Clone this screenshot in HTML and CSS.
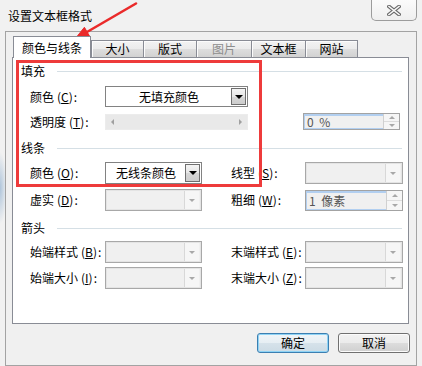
FILE: index.html
```html
<!DOCTYPE html>
<html lang="zh-CN">
<head>
<meta charset="utf-8">
<title>设置文本框格式</title>
<link rel="stylesheet" href="styles.css">
</head>
<body>
<div class="window">
  <div class="titlebar">
    <span class="title">设置文本框格式</span>
    <div class="close">
      <svg width="14" height="11" viewBox="0 0 14 11"><path d="M2 1.5 L12 9.5 M12 1.5 L2 9.5" stroke="#6a6a6a" stroke-width="3.6" stroke-linecap="square"/><path d="M2 1.5 L12 9.5 M12 1.5 L2 9.5" stroke="#fbfbfb" stroke-width="1.6" stroke-linecap="square"/></svg>
    </div>
  </div>
  <div class="client">
    <div class="tabs">
      <div class="tab active">颜色与线条</div>
      <div class="tab">大小</div>
      <div class="tab">版式</div>
      <div class="tab disabled">图片</div>
      <div class="tab">文本框</div>
      <div class="tab">网站</div>
    </div>
    <div class="panel">
      <div class="section s1"><span>填充</span><i class="rule"></i></div>
      <div class="row r1">
        <span class="lbl">颜色<span class="mn">(<u>C</u>)</span>:</span>
        <div class="combo wide"><span class="val">无填充颜色</span><span class="cbtn"><i class="tri"></i></span></div>
      </div>
      <div class="row r2">
        <span class="lbl">透明度<span class="mn">(<u>T</u>)</span>:</span>
        <div class="slider"><i class="sl-left"></i><i class="sl-right"></i></div>
        <div class="spin pct"><span class="sv">0&nbsp;%</span><span class="sb"><i class="up"></i><i class="dn"></i></span></div>
      </div>
      <div class="section s2"><span>线条</span><i class="rule"></i></div>
      <div class="row r3">
        <span class="lbl">颜色<span class="mn">(<u>O</u>)</span>:</span>
        <div class="combo"><span class="val">无线条颜色</span><span class="cbtn"><i class="tri"></i></span></div>
        <span class="lbl rl">线型<span class="mn">(<u>S</u>)</span>:</span>
        <div class="combo dis"><span class="val"></span><span class="cbtn"><i class="tri"></i></span></div>
      </div>
      <div class="row r4">
        <span class="lbl">虚实<span class="mn">(<u>D</u>)</span>:</span>
        <div class="combo dis"><span class="val"></span><span class="cbtn"><i class="tri"></i></span></div>
        <span class="lbl rl">粗细<span class="mn">(<u>W</u>)</span>:</span>
        <div class="spin wt"><span class="sv">1&nbsp;像素</span><span class="sb"><i class="up"></i><i class="dn"></i></span></div>
      </div>
      <div class="section s3"><span>箭头</span><i class="rule"></i></div>
      <div class="row r5">
        <span class="lbl">始端样式<span class="mn">(<u>B</u>)</span>:</span>
        <div class="combo dis"><span class="val"></span><span class="cbtn"><i class="tri"></i></span></div>
        <span class="lbl rl">末端样式<span class="mn">(<u>E</u>)</span>:</span>
        <div class="combo dis"><span class="val"></span><span class="cbtn"><i class="tri"></i></span></div>
      </div>
      <div class="row r6">
        <span class="lbl">始端大小<span class="mn">(<u>I</u>)</span>:</span>
        <div class="combo dis"><span class="val"></span><span class="cbtn"><i class="tri"></i></span></div>
        <span class="lbl rl">末端大小<span class="mn">(<u>Z</u>)</span>:</span>
        <div class="combo dis"><span class="val"></span><span class="cbtn"><i class="tri"></i></span></div>
      </div>
    </div>
    <div class="buttons">
      <button class="btn default">确定</button>
      <button class="btn">取消</button>
    </div>
  </div>
  <div class="annot-box"></div>
  <svg class="annot-arrow" width="70" height="45" viewBox="0 0 70 45">
    <path d="M66 3.5 L17 32" stroke="#ea2a2a" stroke-width="2.6" stroke-linecap="round"/>
    <path d="M5 39 L19.8 36.6 L14.4 27.3 Z" fill="#ea2a2a" stroke="#ea2a2a" stroke-width="1" stroke-linejoin="round"/>
  </svg>
</div>
</body>
</html>
```
FILE: styles.css
```css
* { box-sizing: border-box; margin: 0; padding: 0; }
html, body { width: 422px; height: 366px; overflow: hidden; }
body {
  font: 12px/1 "Noto Sans CJK SC", "DejaVu Sans", sans-serif;
  color: #000;
  background: #f0f0f0;
}
u { text-decoration: underline; }

.window {
  position: relative;
  width: 422px;
  height: 366px;
  display: flex;
  flex-direction: column;
  background:
    radial-gradient(7px 36px at 0 188px, rgba(120,160,200,.55), rgba(120,160,200,0)),
    #f1f1f1;
}

.titlebar {
  height: 31px;
  flex: none;
  display: flex;
  justify-content: space-between;
  align-items: flex-start;
}
.title { margin: 9px 0 0 8px; line-height: 13px; }
.close {
  width: 46px;
  height: 21px;
  margin-right: 5px;
  border: 1px solid #9c9c9c;
  border-top: none;
  border-radius: 0 0 5px 5px;
  background: linear-gradient(#fbfbfb, #efefef);
  display: flex;
  align-items: center;
  justify-content: center;
}

.client {
  margin-left: 5px;
  width: 412px;
  flex: 1;
  border: 1px solid #a3a3a3;
  background: #f0f0f0;
  display: flex;
  flex-direction: column;
}

.tabs {
  display: flex;
  align-items: flex-end;
  height: 21px;
  margin: 4px 0 0 7px;
}
.tab {
  height: 17px;
  border: 1px solid #898c95;
  border-bottom: none;
  background: linear-gradient(#f3f3f3, #ebebeb 50%, #dedede 50%, #d2d2d2);
  box-shadow: inset 1px 1px 0 #fcfcfc;
  display: flex;
  align-items: center;
  justify-content: center;
  margin-left: -1px;
  line-height: 14px;
}
.tab.active {
  height: 22px;
  margin-bottom: -1px;
  margin-left: 0;
  background: #fff;
  box-shadow: none;
  position: relative;
  z-index: 1;
  padding-top: 1px;
}
.tab:nth-child(1) { width: 78px; }
.tab:nth-child(2) { width: 53px; margin-left: 0; }
.tab:nth-child(3) { width: 54px; }
.tab:nth-child(4) { width: 56px; }
.tab:nth-child(5) { width: 55px; }
.tab:nth-child(6) { width: 53px; }
.tab.disabled { color: #8d8d8d; }

.panel {
  margin-left: 6px;
  width: 397px;
  height: 267px;
  flex: none;
  background: #fff;
  border: 1px solid #898c95;
  display: flex;
  flex-direction: column;
}

.section {
  height: 14px;
  display: flex;
  align-items: center;
  padding-left: 8px;
  line-height: 14px;
}
.section .rule {
  flex: 1;
  height: 1px;
  background: #d5dfe5;
  margin: 0 6px 0 12px;
}
.s1 { margin-top: 6px; }
.s2 { margin-top: 11px; }
.s3 { margin-top: 10px; }

.row {
  display: grid;
  grid-template-columns: 75px 97px 29px 74px 98px;
  align-items: center;
  padding-left: 17px;
}
.lbl { line-height: 14px; white-space: nowrap; }
.mn { margin: 0 1px 0 3px; }
.rl { grid-column: 4; }
.r1 { margin-top: 8px; height: 21px; }
.r2 { margin-top: 6px; height: 17px; }
.r3 { margin-top: 7px; height: 22px; }
.r4 { margin-top: 5px; height: 22px; }
.r5 { margin-top: 6px; height: 22px; }
.r6 { margin-top: 4px; height: 22px; }

.combo {
  height: 100%;
  border: 1px solid #828282;
  background: #fff;
  display: flex;
  align-items: stretch;
  padding: 1px;
}
.combo.wide { grid-column: 2 / span 3; width: 143px; }
.combo .val {
  flex: 1;
  display: flex;
  align-items: center;
  justify-content: center;
  line-height: 14px;
}
.cbtn {
  width: 15px;
  border: 1px solid #6f6f6f;
  background: linear-gradient(#f4f4f4, #e6e6e6 50%, #d6d6d6 50%, #cdcdcd);
  display: flex;
  align-items: center;
  justify-content: center;
}
.tri {
  width: 0;
  height: 0;
  border-left: 4px solid transparent;
  border-right: 4px solid transparent;
  border-top: 4px solid #000;
}
.combo.dis {
  border-color: #a8a8a8;
  background: #f0f0f0;
  box-shadow: inset 0 0 0 1px #e4e4e4;
}
.combo.dis .cbtn {
  border: none;
  border-left: 1px solid #d8d8d8;
  background: #f6f6f6;
  margin-right: 1px;
}
.combo.dis .tri {
  border-left-width: 3px;
  border-right-width: 3px;
  border-top: 3px solid #a8a8a8;
}

.slider {
  grid-column: 2 / span 3;
  width: 143px;
  height: 16px;
  background: #e9e9e9;
  border: 1px solid #ececec;
  display: flex;
  align-items: center;
  justify-content: space-between;
  padding: 0 5px;
}
.sl-left, .sl-right {
  width: 0;
  height: 0;
  border-top: 3px solid transparent;
  border-bottom: 3px solid transparent;
}
.sl-left { border-right: 3px solid #a0a0a0; }
.sl-right { border-left: 3px solid #a0a0a0; }

.spin {
  height: 100%;
  border: 1px solid #a3a3a3;
  background: #f0f0f0;
  display: flex;
}
.spin.pct { grid-column: 5; width: 97px; margin-left: -2px; height: 17px; }
.spin.wt { height: 21px; }
.spin .sv {
  flex: 1;
  border-top: 2px solid #b2cff0;
  border-left: 1px solid #b2cff0;
  border-bottom: 1px solid #b2cff0;
  color: #555;
  display: flex;
  align-items: center;
  padding-left: 2px;
  line-height: 12px;
  white-space: nowrap;
  word-spacing: 3px;
}
.spin .sb {
  width: 16px;
  border-left: 1px solid #d0d0d0;
  background: #f6f6f6;
  display: flex;
  flex-direction: column;
}
.sb .up, .sb .dn {
  flex: 1;
  display: flex;
  align-items: center;
  justify-content: center;
}
.sb .up { border-bottom: 1px solid #dcdcdc; }
.sb .up::after, .sb .dn::after {
  content: "";
  width: 0;
  height: 0;
  border-left: 3px solid transparent;
  border-right: 3px solid transparent;
}
.sb .up::after { border-bottom: 3px solid #a8a8a8; }
.sb .dn::after { border-top: 3px solid #a8a8a8; }

.buttons {
  display: flex;
  justify-content: flex-end;
  gap: 9px;
  margin: 9px 6px 0 0;
}
.btn {
  width: 72px;
  height: 20px;
  border: 1px solid #707070;
  border-radius: 3px;
  background: linear-gradient(#f2f2f2, #ebebeb 50%, #dddddd 50%, #cfcfcf);
  box-shadow: inset 0 0 0 1px #fbfbfb;
  font: inherit;
  line-height: 14px;
  color: #000;
}
.btn.default {
  border-color: #3c7fb1;
  box-shadow: inset 0 0 0 1px #8fd3f5;
  background: linear-gradient(#f0f5f8, #e6eef3 50%, #d6e2ea 50%, #ccdbe5);
}

.annot-box {
  position: absolute;
  left: 16px;
  top: 60px;
  width: 246px;
  height: 127px;
  border: 3px solid #ee3b3b;
  pointer-events: none;
}
.annot-arrow {
  position: absolute;
  left: 70px;
  top: 0;
  pointer-events: none;
}
```
